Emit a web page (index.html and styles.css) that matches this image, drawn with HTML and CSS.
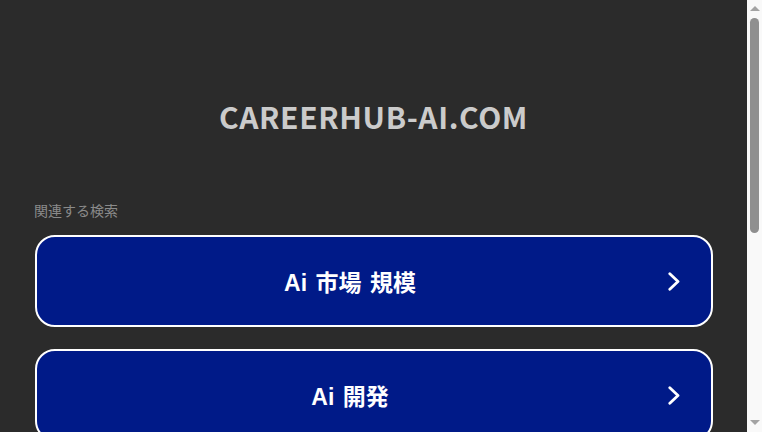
FILE: index.html
```html
<!DOCTYPE html>
<html lang="ja">
<head>
<meta charset="utf-8">
<title>careerhub-ai.com</title>
<link rel="stylesheet" href="styles.css">
</head>
<body>
<div class="page">
  <h1 class="domain">CAREERHUB-AI.COM</h1>
  <div class="related">
    <p class="label">関連する検索</p>
    <a class="item" href="#"><span class="text">Ai 市場 規模</span><svg class="chev" viewBox="0 0 12 19" width="12" height="19"><path d="M1.8 1.8 L10 9.5 L1.8 17.2" fill="none" stroke="#fff" stroke-width="2.8" stroke-linecap="round" stroke-linejoin="round"/></svg></a>
    <a class="item" href="#"><span class="text">Ai 開発</span><svg class="chev" viewBox="0 0 12 19" width="12" height="19"><path d="M1.8 1.8 L10 9.5 L1.8 17.2" fill="none" stroke="#fff" stroke-width="2.8" stroke-linecap="round" stroke-linejoin="round"/></svg></a>
    <a class="item" href="#"><span class="text">Ai 求人</span><svg class="chev" viewBox="0 0 12 19" width="12" height="19"><path d="M1.8 1.8 L10 9.5 L1.8 17.2" fill="none" stroke="#fff" stroke-width="2.8" stroke-linecap="round" stroke-linejoin="round"/></svg></a>
  </div>
</div>
<div class="scrollbar" aria-hidden="true">
  <span class="arrow up"></span>
  <span class="thumb"></span>
  <span class="arrow down"></span>
</div>
</body>
</html>
```
FILE: styles.css
```css
html, body {
  margin: 0;
  padding: 0;
  background: #2b2b2b;
}
body {
  overflow: hidden;
  height: 432px;
}
.page {
  width: 747px;
  box-sizing: border-box;
  padding: 94px 34px 40px;
  font-family: "Noto Sans CJK JP", "Noto Sans", sans-serif;
}
.domain {
  margin: 0;
  text-align: center;
  color: #cbcbcb;
  font-size: 30px;
  font-weight: 700;
  letter-spacing: 0.6px;
  line-height: 44px;
}
.related {
  margin-top: 62px;
  display: flex;
  flex-direction: column;
  gap: 22px;
}
.label {
  margin: 0 0 -7px;
  color: #8a8a8a;
  font-size: 14px;
  line-height: 20px;
}
.item {
  display: flex;
  align-items: center;
  box-sizing: border-box;
  height: 92px;
  margin-left: 1px;
  border: 2px solid #fff;
  border-radius: 20px;
  background: #001a88;
  color: #fff;
  text-decoration: none;
}
.text {
  flex: 1;
  text-align: center;
  font-family: "Liberation Sans", "Noto Sans CJK JP", sans-serif;
  font-size: 23px;
  font-weight: 700;
  word-spacing: 2px;
}
.chev {
  flex: none;
  margin: 0 31px 0 5px;
}
.scrollbar {
  position: fixed;
  top: 0;
  right: 0;
  width: 15px;
  height: 432px;
  background: #f9f9f9;
}
.arrow {
  position: absolute;
  left: 3px;
  width: 0;
  height: 0;
  border-left: 5px solid transparent;
  border-right: 5px solid transparent;
}
.up {
  top: 6px;
  border-bottom: 5px solid #a3a3a3;
}
.down {
  bottom: 7px;
  border-top: 5px solid #a3a3a3;
}
.thumb {
  position: absolute;
  left: 3px;
  top: 18px;
  width: 9px;
  height: 215px;
  border-radius: 5px;
  background: #8f8f8f;
}
```
